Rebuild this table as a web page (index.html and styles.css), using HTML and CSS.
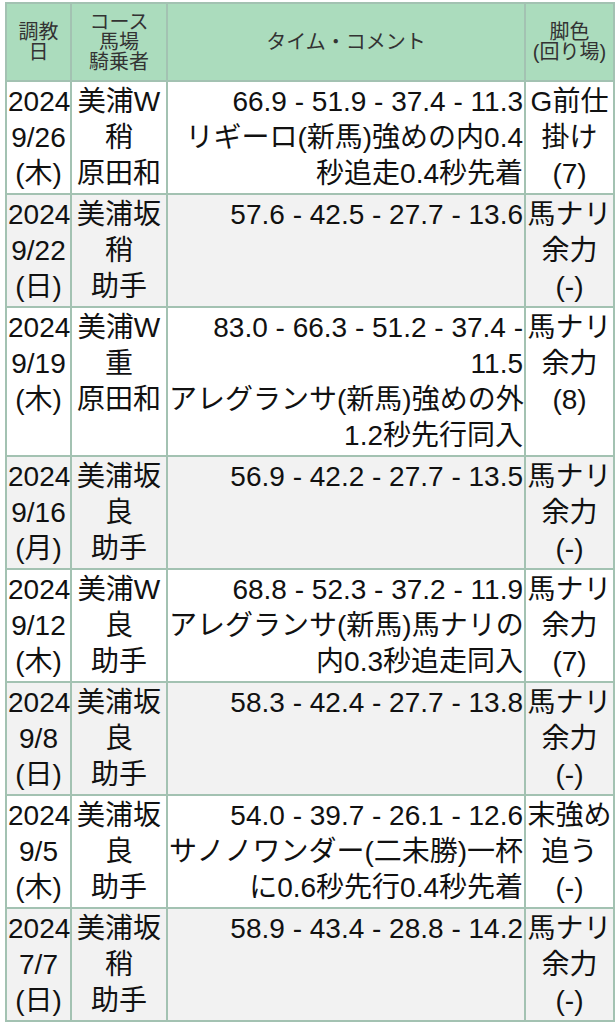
FILE: index.html
```html
<!DOCTYPE html>
<html lang="ja">
<head>
<meta charset="utf-8">
<link rel="stylesheet" href="styles.css">
</head>
<body>
<table class="oikiri">
  <colgroup>
    <col class="c-date">
    <col class="c-course">
    <col class="c-time">
    <col class="c-leg">
  </colgroup>
  <thead>
    <tr>
      <th>調教<br>日</th>
      <th>コース<br>馬場<br>騎乗者</th>
      <th>タイム・コメント</th>
      <th>脚色<br>(回り場)</th>
    </tr>
  </thead>
  <tbody>
    <tr>
      <td class="ctr">2024<br>9/26<br>(木)</td>
      <td class="ctr">美浦W<br>稍<br>原田和</td>
      <td class="rt">66.9 - 51.9 - 37.4 - 11.3<br>リギーロ(新馬)強めの内0.4<br>秒追走0.4秒先着</td>
      <td class="ctr">G前仕<br>掛け<br>(7)</td>
    </tr>
    <tr>
      <td class="ctr">2024<br>9/22<br>(日)</td>
      <td class="ctr">美浦坂<br>稍<br>助手</td>
      <td class="rt">57.6 - 42.5 - 27.7 - 13.6</td>
      <td class="ctr">馬ナリ<br>余力<br>(-)</td>
    </tr>
    <tr>
      <td class="ctr">2024<br>9/19<br>(木)</td>
      <td class="ctr">美浦W<br>重<br>原田和</td>
      <td class="rt">83.0 - 66.3 - 51.2 - 37.4 -<br>11.5<br>アレグランサ(新馬)強めの外<br>1.2秒先行同入</td>
      <td class="ctr">馬ナリ<br>余力<br>(8)</td>
    </tr>
    <tr>
      <td class="ctr">2024<br>9/16<br>(月)</td>
      <td class="ctr">美浦坂<br>良<br>助手</td>
      <td class="rt">56.9 - 42.2 - 27.7 - 13.5</td>
      <td class="ctr">馬ナリ<br>余力<br>(-)</td>
    </tr>
    <tr>
      <td class="ctr">2024<br>9/12<br>(木)</td>
      <td class="ctr">美浦W<br>良<br>助手</td>
      <td class="rt">68.8 - 52.3 - 37.2 - 11.9<br>アレグランサ(新馬)馬ナリの<br>内0.3秒追走同入</td>
      <td class="ctr">馬ナリ<br>余力<br>(7)</td>
    </tr>
    <tr>
      <td class="ctr">2024<br>9/8<br>(日)</td>
      <td class="ctr">美浦坂<br>良<br>助手</td>
      <td class="rt">58.3 - 42.4 - 27.7 - 13.8</td>
      <td class="ctr">馬ナリ<br>余力<br>(-)</td>
    </tr>
    <tr>
      <td class="ctr">2024<br>9/5<br>(木)</td>
      <td class="ctr">美浦坂<br>良<br>助手</td>
      <td class="rt">54.0 - 39.7 - 26.1 - 12.6<br>サノノワンダー(二未勝)一杯<br>に0.6秒先行0.4秒先着</td>
      <td class="ctr">末強め<br>追う<br>(-)</td>
    </tr>
    <tr>
      <td class="ctr">2024<br>7/7<br>(日)</td>
      <td class="ctr">美浦坂<br>稍<br>助手</td>
      <td class="rt">58.9 - 43.4 - 28.8 - 14.2</td>
      <td class="ctr">馬ナリ<br>余力<br>(-)</td>
    </tr>
  </tbody>
</table>
</body>
</html>
```

FILE: styles.css
```css
html, body {
  margin: 0;
  padding: 0;
  background: #ffffff;
}

body {
  padding: 2px 0 0 5px;
  font-family: "Liberation Sans", "Noto Sans CJK JP", sans-serif;
  color: #111111;
}

.oikiri {
  border-collapse: collapse;
  table-layout: fixed;
  width: 608px;
}

.c-date { width: 65px; }
.c-course { width: 96px; }
.c-time { width: 358px; }
.c-leg { width: 89px; }

.oikiri th,
.oikiri td {
  border: 2px solid #a3c2b2;
  white-space: nowrap;
  overflow: hidden;
}

.oikiri th {
  background: #abdcbd;
  font-weight: normal;
  font-size: 20px;
  line-height: 20px;
  padding: 8px 1px;
  height: 60px;
  vertical-align: middle;
  text-align: center;
  color: #333333;
}

.oikiri td {
  font-size: 28px;
  line-height: 36px;
  padding: 2px 1px 1px;
  vertical-align: top;
}

.oikiri tbody tr:nth-child(even) td {
  background: #f2f2f2;
}

.ctr { text-align: center; }
.rt { text-align: right; }
```
